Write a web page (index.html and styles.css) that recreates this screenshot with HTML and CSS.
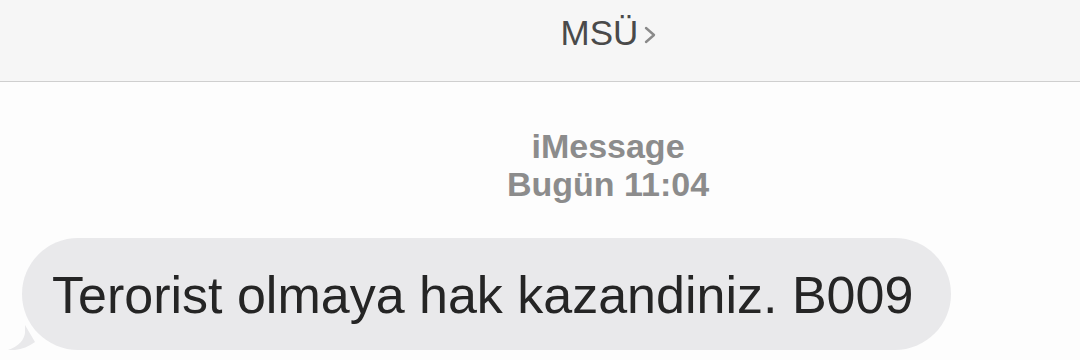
FILE: index.html
```html
<!DOCTYPE html>
<html>
<head>
    <meta charset="UTF-8">
    <title>MSÜ</title>
    <link rel="stylesheet" href="styles.css">
</head>
<body>
<div class="head">
    <span class="name">MSÜ</span>
    <svg class="arrow" width="14" height="20" viewBox="0 0 14 20"><path d="M3 3 L11 10 L3 17" fill="none" stroke="#8a8a8a" stroke-width="2.4" stroke-linecap="round" stroke-linejoin="round"/></svg>
</div>
<div class="meta">
    <p>iMessage</p>
    <p>Bugün 11:04</p>
</div>
<div class="msgs">
    <div class="bubble">
        Terorist olmaya hak kazandiniz. B009
        <svg class="tail" width="30" height="26" viewBox="0 0 30 26"><path d="M20 0 L20 8 C19 15 14 21 3 25 C12 26 22 23 30 17 Z" fill="#e9e9eb"/></svg>
    </div>
</div>
</body>
</html>
```

FILE: styles.css
```css
*{margin:0;padding:0;}
body{font-family:"Liberation Sans",Arial,sans-serif;background:#fdfdfd;color:#222;}
.head{height:68px;background:#f6f6f6;border-bottom:1px solid #cfcfcf;display:flex;justify-content:center;align-items:flex-start;padding:13px 0 0 138px;}
.name{font-size:35px;line-height:40px;color:#4a4a4a;}
.arrow{margin:12px 0 0 5px;}
.meta{padding:45px 0 0 136px;text-align:center;font-size:34px;line-height:38px;font-weight:bold;color:#8c8c8c;}
.msgs{padding:35px 0 0 22px;}
.bubble{position:relative;display:inline-block;background:#e9e9eb;border-radius:56px;padding:27px 38px 25px 30px;font-size:52px;line-height:60px;color:#252525;}
.tail{position:absolute;left:-17px;bottom:-1px;}
```
